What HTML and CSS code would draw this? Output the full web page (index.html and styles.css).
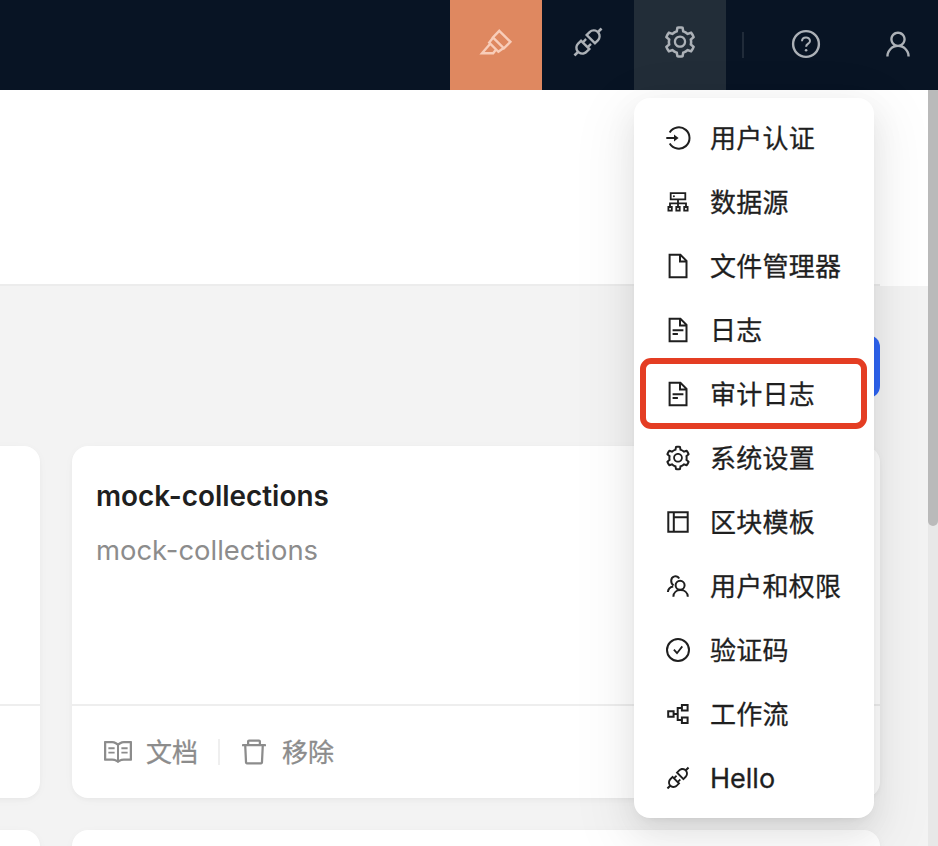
FILE: index.html
```
<!DOCTYPE html>
<html lang="zh-CN">
<head>
<meta charset="utf-8">
<title>插件管理器</title>
<link rel="stylesheet" href="styles.css">
</head>
<body>
<svg class="defs" width="0" height="0">
<symbol id="gear" viewBox="0 0 1024 1024"><path d="M924.8 625.7l-65.5-56c3.1-19 4.7-38.4 4.7-57.8s-1.6-38.8-4.7-57.8l65.5-56a32.03 32.03 0 009.3-35.2l-.9-2.6a443.74 443.74 0 00-79.7-137.9l-1.8-2.1a32.12 32.12 0 00-35.1-9.5l-81.3 28.9c-30-24.6-63.5-44-99.7-57.6l-15.7-85a32.05 32.05 0 00-25.8-25.7l-2.7-.5c-52.1-9.4-106.9-9.4-159 0l-2.7.5a32.05 32.05 0 00-25.8 25.7l-15.8 85.4a351.86 351.86 0 00-99 57.4l-81.9-29.1a32 32 0 00-35.1 9.5l-1.8 2.1a446.02 446.02 0 00-79.7 137.9l-.9 2.6c-4.5 12.5-.8 26.5 9.3 35.2l66.3 56.6c-3.1 18.8-4.6 38-4.6 57.1 0 19.2 1.5 38.4 4.6 57.1L99 625.5a32.03 32.03 0 00-9.3 35.2l.9 2.6c18.1 50.4 44.9 96.9 79.7 137.9l1.8 2.1a32.12 32.12 0 0035.1 9.5l81.9-29.1c29.8 24.5 63.1 43.9 99 57.4l15.8 85.4a32.05 32.05 0 0025.8 25.7l2.7.5a449.4 449.4 0 00159 0l2.7-.5a32.05 32.05 0 0025.8-25.7l15.7-85a350 350 0 0099.7-57.6l81.3 28.9a32 32 0 0035.1-9.5l1.8-2.1c34.8-41.1 61.6-87.5 79.7-137.9l.9-2.6c4.5-12.3.8-26.3-9.3-35zM788.3 465.9c2.5 15.1 3.8 30.6 3.8 46.1s-1.3 31-3.8 46.1l-6.6 40.1 74.7 63.9a370.03 370.03 0 01-42.6 73.6L721 702.8l-31.4 25.8c-23.9 19.6-50.5 35-79.3 45.8l-38.1 14.3-17.9 97a377.5 377.5 0 01-85 0l-17.9-97.2-37.8-14.5c-28.5-10.8-55-26.2-78.7-45.7l-31.4-25.9-93.4 33.2c-17-22.9-31.2-47.6-42.6-73.6l75.5-64.5-6.5-40c-2.4-14.9-3.7-30.3-3.7-45.5 0-15.3 1.2-30.6 3.7-45.5l6.5-40-75.5-64.5c11.3-26.1 25.6-50.7 42.6-73.6l93.4 33.2 31.4-25.9c23.7-19.5 50.2-34.9 78.7-45.7l37.9-14.3 17.9-97.2c28.1-3.2 56.8-3.2 85 0l17.9 97 38.1 14.3c28.7 10.8 55.4 26.2 79.3 45.8l31.4 25.8 92.8-32.9c17 22.9 31.2 47.6 42.6 73.6L781.8 426l6.5 39.9zM512 326c-97.2 0-176 78.8-176 176s78.8 176 176 176 176-78.8 176-176-78.8-176-176-176zm79.2 255.2A111.6 111.6 0 01512 614c-29.9 0-58-11.7-79.2-32.8A111.6 111.6 0 01400 502c0-29.9 11.7-58 32.8-79.2C454 401.6 482.1 390 512 390c29.9 0 58 11.6 79.2 32.8A111.6 111.6 0 01624 502c0 29.9-11.7 58-32.8 79.2z"/></symbol>
<symbol id="plug" viewBox="0 0 1024 1024"><path d="M917.7 148.8l-42.4-42.4c-1.6-1.6-3.6-2.3-5.7-2.3s-4.1.8-5.7 2.3l-76.1 76.1a199.27 199.27 0 00-112.1-34.3c-51.2 0-102.4 19.5-141.5 58.6L432.3 308.7a8.03 8.03 0 000 11.3L704 591.7c1.6 1.6 3.6 2.3 5.7 2.3 2 0 4.1-.8 5.7-2.3l101.9-101.9c68.9-69 77-175.7 24.3-253.5l76.1-76.1c3.1-3.2 3.1-8.3 0-11.4zM769.1 441.7l-59.4 59.4-186.8-186.8 59.4-59.4c24.9-24.9 58.1-38.7 93.4-38.7 35.3 0 68.4 13.7 93.4 38.7 24.9 24.9 38.7 58.1 38.7 93.4 0 35.3-13.8 68.4-38.7 93.4zm-190.2 105a8.03 8.03 0 00-11.3 0L501 613.3 410.7 523l66.7-66.7c3.1-3.1 3.1-8.2 0-11.3L441 408.6a8.03 8.03 0 00-11.3 0L363 475.3l-43-43a7.85 7.85 0 00-5.7-2.3c-2 0-4.1.8-5.7 2.3L206.8 534.2c-68.9 69-77 175.7-24.3 253.5l-76.1 76.1a8.03 8.03 0 000 11.3l42.4 42.4c1.6 1.6 3.6 2.3 5.7 2.3s4.1-.8 5.7-2.3l76.1-76.1c33.7 22.9 72.9 34.3 112.1 34.3 51.2 0 102.4-19.5 141.5-58.6l101.9-101.9c3.1-3.1 3.1-8.2 0-11.3l-43-43 66.7-66.7c3.1-3.1 3.1-8.2 0-11.3l-36.6-36.2zM441.7 769.1a131.32 131.32 0 01-93.4 38.7c-35.3 0-68.4-13.7-93.4-38.7a131.32 131.32 0 01-38.7-93.4c0-35.3 13.7-68.4 38.7-93.4l59.4-59.4 186.8 186.8-59.4 59.4z"/></symbol>
<symbol id="doc" viewBox="0 0 28 28"><path class="line" d="M5.6 2.8H16.4L22.5 8.9V25.2H5.6ZM16 2.8V9.4H22.5M8.6 14.3H19.4M8.6 18H13.9"/></symbol>
</svg>

<header class="topbar">
  <div class="tool tool-edit"><svg class="icon-lg" viewBox="0 0 36 36"><path class="line-lg" d="M21.3 6.8L32.4 17.8L25.9 24.3L14.9 13.4ZM15.2 13.6L11.2 18.6L20.4 27.8L25.6 24.1M12 20L4 29.2H15.2L18 25.6"/></svg></div>
  <div class="tool"><svg class="icon-lg"><use href="#plug"/></svg></div>
  <div class="tool tool-open"><svg class="icon-lg"><use href="#gear"/></svg></div>
  <span class="bar-divider"></span>
  <div class="tool"><svg class="icon-md" viewBox="0 0 32 32"><circle class="line-lg" cx="16" cy="16" r="12.9"/><path class="line-md" d="M12 13.2C12 8.4 20 8.4 20 13C20 15.8 16.1 15.6 16.1 18.8"/><circle cx="16.1" cy="22.3" r="1.3"/></svg></div>
  <div class="tool"><svg class="icon-md" viewBox="0 0 1024 1024"><path d="M858.5 763.6a374 374 0 00-80.6-119.5 375.63 375.63 0 00-119.5-80.6c-.4-.2-.8-.3-1.2-.5C719.5 518 760 444.7 760 362c0-137-111-248-248-248S264 225 264 362c0 82.7 40.5 156 102.8 201.1-.4.2-.8.3-1.2.5-44.8 18.9-85 46-119.5 80.6a375.63 375.63 0 00-80.6 119.5A371.7 371.7 0 00136 901.8a8 8 0 008 8.2h60c4.4 0 7.9-3.5 8-7.8 2-77.2 33-149.5 87.8-204.3 56.7-56.7 132-87.9 212.2-87.9s155.5 31.2 212.2 87.9C779 752.7 810 825 812 902.2c.1 4.4 3.6 7.8 8 7.8h60a8 8 0 008-8.2c-1-47.8-10.9-94.3-29.5-138.2zM512 534c-45.9 0-89.1-17.9-121.6-50.4S340 407.9 340 362c0-45.9 17.9-89.1 50.4-121.6S466.1 190 512 190s89.1 17.9 121.6 50.4S684 316.1 684 362c0 45.9-17.9 89.1-50.4 121.6S557.9 534 512 534z"/></svg></div>

  <nav class="menu">
    <a class="item"><svg class="icon" viewBox="0 0 28 28"><path class="line" d="M5.7 8.4A10.7 10.7 0 1 1 5.7 19.6M2.3 14H11"/><path d="M10 10.4L14.6 14L10 17.6Z"/></svg><span>用户认证</span></a>
    <a class="item"><svg class="icon" viewBox="0 0 28 28"><path class="line thin" d="M6.7 5.2H21.3V11.4H6.7ZM14 11.4V19M6 19V15.3H22V19M4.4 19H7.8V22.6H4.4ZM12.3 19H15.7V22.6H12.3ZM20.2 19H23.6V22.6H20.2Z"/><circle cx="9.9" cy="8.3" r="1"/></svg><span>数据源</span></a>
    <a class="item"><svg class="icon" viewBox="0 0 28 28"><path class="line" d="M5.6 2.8H16.4L22.5 8.9V25.2H5.6ZM16 2.8V9.4H22.5"/></svg><span>文件管理器</span></a>
    <a class="item"><svg class="icon"><use href="#doc"/></svg><span>日志</span></a>
    <a class="item marked"><svg class="icon"><use href="#doc"/></svg><span>审计日志</span></a>
    <a class="item"><svg class="icon"><use href="#gear"/></svg><span>系统设置</span></a>
    <a class="item"><svg class="icon" viewBox="0 0 28 28"><path class="line" d="M4.3 4.3H23.7V23.7H4.3ZM9.8 4.3V23.7M9.8 9.3H23.7"/></svg><span>区块模板</span></a>
    <a class="item"><svg class="icon" viewBox="0 0 28 28"><circle class="line" cx="16.1" cy="13.3" r="4.5"/><path class="line" d="M9.4 24.8C9.4 15.8 23.6 15.8 23.8 24.8M15.2 6.5C13.2 2.6 7.2 4 7.2 8.8C7.2 11 8.2 12.6 9.6 13.3M9.2 14.4C6 15 4.1 17 3.9 20"/></svg><span>用户和权限</span></a>
    <a class="item"><svg class="icon" viewBox="0 0 28 28"><circle class="line" cx="14" cy="14" r="11"/><path class="line thin" d="M9.9 13.6L13 17.2L18.3 10.4"/></svg><span>验证码</span></a>
    <a class="item"><svg class="icon" viewBox="0 0 28 28"><path class="line" d="M4.2 11.2H9.6V16.8H4.2ZM17.9 5.1H23.6V10.6H17.9ZM17.9 17.4H23.6V22.9H17.9ZM9.6 14H13.7M17.9 7.9H13.7V20.1H17.9"/></svg><span>工作流</span></a>
    <a class="item latin"><svg class="icon"><use href="#plug"/></svg><span>Hello</span></a>
  </nav>
</header>

<div class="viewport">
  <main class="page">
    <div class="page-head"><div class="rule"></div></div>
    <div class="actions"><span class="add"></span></div>
    <div class="cards">
      <section class="card"><div class="card-body"></div><div class="card-foot"></div></section>
      <section class="card">
        <div class="card-body"><h2>mock-collections</h2><p>mock-collections</p></div>
        <div class="card-foot">
          <a class="link"><svg class="icon-md" viewBox="0 0 1024 1024"><path d="M928 161H699.2c-49.1 0-97.1 14.1-138.4 40.7L512 233l-48.8-31.3A255.2 255.2 0 00324.8 161H96c-17.7 0-32 14.3-32 32v568c0 17.7 14.3 32 32 32h228.8c49.1 0 97.1 14.1 138.4 40.7l44.4 28.6c1.3.8 2.8 1.3 4.3 1.3s3-.4 4.3-1.3l44.4-28.6C602 807.1 650.1 793 699.2 793H928c17.7 0 32-14.3 32-32V193c0-17.7-14.3-32-32-32zM324.8 721H136V233h188.8c35.4 0 69.8 10.1 99.5 29.2l48.8 31.3 6.9 4.5v462c-47.6-25.6-100.8-39-155.2-39zm563.2 0H699.2c-54.4 0-107.6 13.4-155.2 39V298l6.9-4.5 48.8-31.3c29.7-19.1 64.1-29.2 99.5-29.2H888v488zM204 361H404V421H204ZM204 501H404V561H204ZM620 361H820V421H620ZM620 501H820V561H620Z"/></svg><span>文档</span></a>
          <span class="foot-divider"></span>
          <a class="link"><svg class="icon-md" viewBox="0 0 1024 1024"><path d="M360 184h-8c4.4 0 8-3.6 8-8v8h304v-8c0 4.4 3.6 8 8 8h-8v72h72v-80c0-35.3-28.7-64-64-64H352c-35.3 0-64 28.7-64 64v80h72v-72zm504 72H160c-17.7 0-32 14.3-32 32v32c0 4.4 3.6 8 8 8h60.4l24.7 523c1.6 34.1 29.8 61 63.9 61h454c34.2 0 62.3-26.8 63.9-61l24.7-523H888c4.4 0 8-3.6 8-8v-32c0-17.7-14.3-32-32-32zM731.3 840H292.7l-24.2-512h487l-24.2 512z"/></svg><span>移除</span></a>
        </div>
      </section>
      <section class="card"></section>
      <section class="card"></section>
    </div>
  </main>
  <div class="scroll-track"><div class="scroll-thumb"></div></div>
</div>
</body>
</html>
```
FILE: styles.css
```
* { box-sizing: border-box; }
body {
  margin: 0;
  height: 846px;
  overflow: hidden;
  display: flex;
  flex-direction: column;
  background: #f3f3f3;
  color: #1f1f1f;
  font: 26px/40px Inter, "Noto Sans CJK SC", sans-serif;
}
.defs { position: absolute; }
svg { display: block; flex: none; fill: currentColor; }
.line, .line-md, .line-lg { fill: none; stroke: currentColor; stroke-width: 2; }
.line-lg { stroke-width: 2.4; }
.thin { stroke-width: 1.8; }
.icon { width: 28px; height: 28px; }
.icon-md { width: 32px; height: 32px; }
.icon-lg { width: 36px; height: 36px; }

.topbar {
  position: relative;
  z-index: 2;
  flex: none;
  height: 90px;
  display: flex;
  padding-left: 450px;
  background: #081424;
  color: #acb1b7;
}
.tool {
  flex: none;
  width: 92px;
  display: flex;
  align-items: center;
  justify-content: center;
  padding-bottom: 6px;
}
.tool:has(.icon-md) { padding-bottom: 2px; }
.tool-edit { background: #df8860; color: #f8cdb9; }
.tool-open { background: #222d38; }
.bar-divider { flex: none; width: 2px; height: 26px; margin: 32px 16px 0; background: #202b39; }

.menu {
  position: absolute;
  top: 98px;
  left: 634px;
  width: 240px;
  padding: 8px;
  border-radius: 16px;
  background: #fff;
  color: #1f1f1f;
  box-shadow: 0 12px 32px rgba(0,0,0,.08), 0 6px 12px -8px rgba(0,0,0,.12), 0 18px 56px 16px rgba(0,0,0,.05);
}
.item {
  position: relative;
  display: flex;
  align-items: center;
  gap: 18px;
  height: 64px;
  padding-left: 22px;
  white-space: nowrap;
}
.item span, .link span {
  padding-top: 2px;
  letter-spacing: .25px;
  -webkit-text-stroke: .3px currentColor;
}
.item.latin span { padding-top: 1px; font-size: 27px; letter-spacing: 0; }
.link span { letter-spacing: 0; }
.marked::after {
  content: "";
  position: absolute;
  inset: -4px -1px -3px -2px;
  border: 6px solid #e43d23;
  border-radius: 11px;
}

.viewport { flex: 1; min-height: 0; display: flex; }
.page { flex: 1; min-width: 0; overflow: hidden; }
.page-head { height: 196px; padding: 194px 48px 0 0; background: #fff; }
.rule { height: 2px; background: #ececec; }
.actions { height: 160px; padding: 49px 48px 0 0; display: flex; justify-content: flex-end; }
.add { width: 150px; height: 63px; border-radius: 12px; background: #2f66f5; }
.cards {
  display: grid;
  grid-template-columns: 808px 808px;
  grid-auto-rows: 352px;
  gap: 32px;
  margin-left: -768px;
}
.card {
  display: flex;
  flex-direction: column;
  border-radius: 16px;
  background: #fff;
  box-shadow: 0 2px 4px rgba(0,0,0,.03), 0 2px 12px rgba(0,0,0,.025);
}
.card-body { flex: 1; padding: 30px 24px 0; }
h2, p { margin: 0; line-height: 40px; }
h2 { font-size: 27.9px; font-weight: 600; }
p { margin-top: 14px; font-size: 27.4px; color: #8c8c8c; }
.card-foot {
  height: 94px;
  padding-left: 30px;
  display: flex;
  align-items: center;
  border-top: 2px solid #eee;
  color: #8c8c8c;
}
.link { display: flex; align-items: center; gap: 12px; }
.foot-divider { width: 2px; height: 26px; margin: 0 18px 0 20px; background: #efefef; }
.scroll-track { width: 10px; background: #e8e8e8; }
.scroll-thumb { height: 436px; border-radius: 0 0 5px 5px; background: #bababa; }
```
